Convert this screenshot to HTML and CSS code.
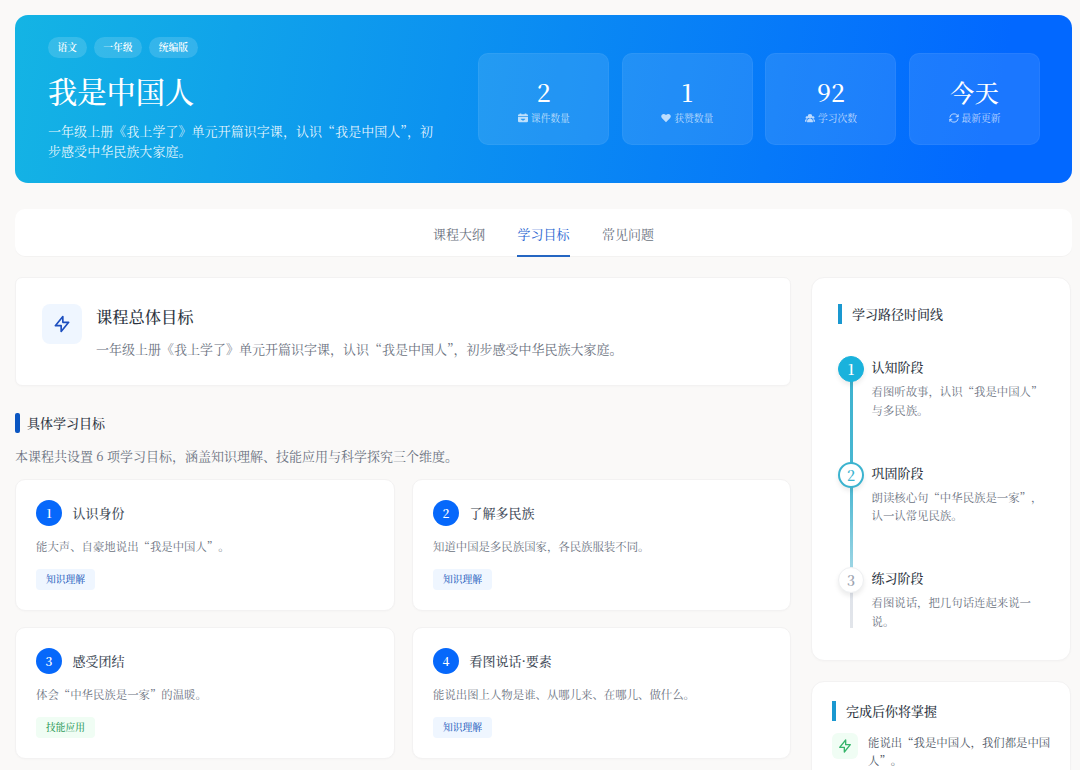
FILE: index.html
```html
<!DOCTYPE html>
<html lang="zh-CN">

<head>
    <meta charset="UTF-8">
    <meta name="viewport" content="width=device-width, initial-scale=1.0">
    <title>我是中国人</title>
    <link rel="stylesheet" href="styles.css">
</head>

<body>
    <div class="page">
        <header class="hero">
            <div class="hero-info">
                <div class="tags">
                    <span class="tag">语文</span>
                    <span class="tag">一年级</span>
                    <span class="tag">统编版</span>
                </div>
                <h1>我是中国人</h1>
                <p>一年级上册《我上学了》单元开篇识字课，认识“我是中国人”，初步感受中华民族大家庭。</p>
            </div>
            <div class="stats">
                <div class="stat">
                    <div class="stat-value">2</div>
                    <div class="stat-label">
                        <svg viewBox="0 0 24 24"><path fill="currentColor" fill-rule="evenodd" d="M4 1h4v2h8V1h4v2h1a3 3 0 0 1 3 3v2H0V6a3 3 0 0 1 3-3h1zM0 9.500h24V19a3 3 0 0 1-3 3H3a3 3 0 0 1-3-3zm7 4V16h3v2h4v-2h3v-2.500z"/></svg>
                        课件数量
                    </div>
                </div>
                <div class="stat">
                    <div class="stat-value">1</div>
                    <div class="stat-label">
                        <svg viewBox="0 0 24 24"><path fill="currentColor" d="M12 22 2.6 12.6C-.2 9.8 0 6 2.200 3.900 4.800 1.500 9 1.700 12 5c3-3.300 7.200-3.500 9.800-1.100C24 6 24.200 9.800 21.400 12.600z"/></svg>
                        获赞数量
                    </div>
                </div>
                <div class="stat">
                    <div class="stat-value">92</div>
                    <div class="stat-label">
                        <svg viewBox="0 0 24 24" fill="currentColor"><circle cx="12" cy="8" r="5.500"/><circle cx="4.500" cy="11" r="3"/><circle cx="19.500" cy="11" r="3"/><path d="M5 22v-2c0-4 3-6 7-6s7 2 7 6v2zM0 21v-2c0-2.500 2-4.500 5-4.500-1 1.500-1.500 3.500-1.500 6.500zM24 21v-2c0-2.500-2-4.500-5-4.500 1 1.500 1.500 3.500 1.500 6.500z"/></svg>
                        学习次数
                    </div>
                </div>
                <div class="stat">
                    <div class="stat-value">今天</div>
                    <div class="stat-label">
                        <svg viewBox="0 0 24 24" fill="none" stroke="currentColor" stroke-width="2.400"><path d="M2 11a10 10 0 0 1 18-5l2 3M22 3v6h-6M22 13a10 10 0 0 1-18 5l-2-3M2 21v-6h6"/></svg>
                        最新更新
                    </div>
                </div>
            </div>
        </header>

        <nav class="tabs">
            <a class="tab">课程大纲</a>
            <a class="tab active">学习目标</a>
            <a class="tab">常见问题</a>
        </nav>

        <div class="content">
            <main>
                <section class="card overall">
                    <div class="overall-icon">
                        <svg viewBox="0 0 24 24"><path d="M13 10V3L4 14h7v7l9-11h-7z"/></svg>
                    </div>
                    <div>
                        <h2>课程总体目标</h2>
                        <p>一年级上册《我上学了》单元开篇识字课，认识“我是中国人”，初步感受中华民族大家庭。</p>
                    </div>
                </section>

                <h3 class="goals-title">具体学习目标</h3>
                <p class="goals-intro">本课程共设置 6 项学习目标，涵盖知识理解、技能应用与科学探究三个维度。</p>

                <div class="goals">
                    <div class="card goal">
                        <div class="goal-head"><span class="num">1</span>认识身份</div>
                        <p>能大声、自豪地说出“我是中国人”。</p>
                        <span class="badge blue">知识理解</span>
                    </div>
                    <div class="card goal">
                        <div class="goal-head"><span class="num">2</span>了解多民族</div>
                        <p>知道中国是多民族国家，各民族服装不同。</p>
                        <span class="badge blue">知识理解</span>
                    </div>
                    <div class="card goal">
                        <div class="goal-head"><span class="num">3</span>感受团结</div>
                        <p>体会“中华民族是一家”的温暖。</p>
                        <span class="badge green">技能应用</span>
                    </div>
                    <div class="card goal">
                        <div class="goal-head"><span class="num">4</span>看图说话·要素</div>
                        <p>能说出图上人物是谁、从哪儿来、在哪儿、做什么。</p>
                        <span class="badge blue">知识理解</span>
                    </div>
                </div>
            </main>

            <aside>
                <section class="card timeline">
                    <h3 class="side-title">学习路径时间线</h3>
                    <ol class="steps">
                        <li class="step done">
                            <span class="dot">1</span>
                            <div>
                                <h4>认知阶段</h4>
                                <p>看图听故事，认识“我是中国人”与多民族。</p>
                            </div>
                        </li>
                        <li class="step current">
                            <span class="dot">2</span>
                            <div>
                                <h4>巩固阶段</h4>
                                <p>朗读核心句“中华民族是一家”，认一认常见民族。</p>
                            </div>
                        </li>
                        <li class="step">
                            <span class="dot">3</span>
                            <div>
                                <h4>练习阶段</h4>
                                <p>看图说话，把几句话连起来说一说。</p>
                            </div>
                        </li>
                    </ol>
                </section>

                <section class="card outcome">
                    <h3 class="side-title">完成后你将掌握</h3>
                    <div class="outcome-item">
                        <div class="outcome-icon">
                            <svg viewBox="0 0 24 24"><path d="M13 10V3L4 14h7v7l9-11h-7z"/></svg>
                        </div>
                        <p>能说出“我是中国人，我们都是中国人”。</p>
                    </div>
                </section>
            </aside>
        </div>
    </div>
</body>

</html>
```

FILE: styles.css
```css
* {
    box-sizing: border-box;
    margin: 0;
    padding: 0;
}

body {
    height: 770px;
    overflow: hidden;
    background-color: #faf9f8;
    color: #2b3340;
    font-family: "Noto Serif CJK SC", "Noto Serif SC", "Source Han Serif SC", "Noto Sans CJK SC", serif;
    font-size: 13px;
    line-height: 20px;
}

h1, h2, h3, h4 {
    font-weight: 500;
}

.page {
    height: 770px;
    overflow: hidden;
    padding: 15px 8px 0 15px;
}

.card {
    background-color: #fff;
    border: 1px solid #f3f2f2;
    border-radius: 10px;
    box-shadow: 0 1px 2px rgba(0, 0, 0, 0.02);
}

/* cabecera */
.hero {
    display: flex;
    justify-content: space-between;
    height: 168px;
    padding: 22px 32px 0 33px;
    border-radius: 13px;
    background: linear-gradient(100deg, #14b4e4 0%, #0268ff 92%);
    color: #fff;
}

.hero-info {
    width: 392px;
}

.tags {
    display: flex;
    gap: 7px;
}

.tag {
    height: 21px;
    padding: 0 9.6px;
    border-radius: 11px;
    background-color: rgba(255, 255, 255, 0.15);
    font-size: 9.75px;
    font-weight: 600;
    line-height: 21px;
}

.hero h1 {
    margin: 12px 0 11px;
    font-size: 29.25px;
    line-height: 40px;
}

.hero p {
    color: rgba(255, 255, 255, 0.9);
    letter-spacing: 0.05px;
}

.stats {
    display: grid;
    grid-template-columns: repeat(4, 131px);
    gap: 12.6px;
    height: 92px;
    margin-top: 16px;
}

.stat {
    padding-top: 22px;
    border: 1px solid rgba(255, 255, 255, 0.05);
    border-radius: 10px;
    background-color: rgba(255, 255, 255, 0.1);
    text-align: center;
}

.stat-value {
    font-size: 24.4px;
    font-weight: 500;
    line-height: 31px;
}

.stat-label {
    display: flex;
    justify-content: center;
    align-items: center;
    gap: 3px;
    margin-top: 1px;
    color: rgba(255, 255, 255, 0.7);
    font-size: 9.75px;
}

.stat-label svg {
    width: 10px;
    height: 10px;
}

/* pestañas */
.tabs {
    display: flex;
    justify-content: center;
    gap: 32.5px;
    height: 47px;
    margin-top: 26px;
    border-radius: 10px;
    background-color: #fff;
    box-shadow: 0 1px 1px rgba(0, 0, 0, 0.03);
}

.tab {
    height: 48px;
    color: #6b7280;
    line-height: 49px;
}

.tab.active {
    border-bottom: 2px solid #2566c2;
    color: #2563d0;
}

.content {
    display: flex;
    gap: 20px;
    margin-top: 21px;
}

main {
    width: 776px;
}

aside {
    width: 260px;
}

.overall {
    display: flex;
    gap: 14px;
    height: 109px;
    padding: 26px;
    border-radius: 7px;
}

.overall-icon {
    flex: none;
    width: 40px;
    height: 40px;
    border-radius: 8px;
    background-color: #eff6ff;
}

.overall-icon svg {
    width: 20px;
    height: 20px;
    margin: 10px;
    stroke: #1d4fbf;
}

.overall-icon svg, .outcome-icon svg {
    display: block;
    fill: none;
    stroke-width: 2;
    stroke-linecap: round;
    stroke-linejoin: round;
}

.overall h2 {
    margin: -1px 0 10px;
    font-size: 16.25px;
    line-height: 26px;
}

.overall p, .goals-intro {
    color: #6b7280;
}

.goals-title {
    display: flex;
    align-items: center;
    gap: 7px;
    margin-top: 27px;
    font-size: 13px;
}

.goals-title::before {
    content: "";
    width: 5px;
    height: 20px;
    border-radius: 2px;
    background-color: #0a56c2;
}

.goals-intro {
    margin: 13px 0 13px;
}

.goals {
    display: grid;
    grid-template-columns: 380px 379px;
    gap: 16px 17px;
}

.goal {
    height: 132px;
    padding: 20px;
}

.goal-head {
    display: flex;
    align-items: center;
    gap: 10.5px;
    color: #414a57;
    font-weight: 500;
}

.num {
    width: 26px;
    height: 26px;
    border-radius: 50%;
    background-color: #0668fb;
    color: #fff;
    font-size: 12px;
    font-weight: 600;
    line-height: 26px;
    text-align: center;
}

/* comillas y puntos a ancho completo */
.goal p, .step p, .outcome-item p {
    font-size: 11.4px;
    text-spacing-trim: space-all;
}

.goal p {
    margin: 10px 0 13px;
    color: #6b7280;
}

.badge {
    display: block;
    width: 59px;
    height: 21px;
    border-radius: 4px;
    font-size: 9.75px;
    font-weight: 500;
    line-height: 21px;
    text-align: center;
}

.badge.blue {
    background-color: #eff6ff;
    color: #2b64c0;
}

.badge.green {
    background-color: #f0fdf4;
    color: #2f9b5b;
}

/* columna lateral */
.side-title {
    display: flex;
    align-items: center;
    gap: 10px;
    font-size: 13px;
}

.side-title::before {
    content: "";
    width: 4px;
    height: 20px;
    background-color: #1a98d0;
}

.timeline {
    height: 384px;
    padding: 26px;
    border-radius: 13px;
}

.steps {
    position: relative;
    margin-top: 32px;
    list-style: none;
}

/* linea vertical detras de los puntos */
.steps::before {
    content: "";
    position: absolute;
    top: 12px;
    left: 12px;
    width: 3px;
    height: 260px;
    background: linear-gradient(#3cb2cf 0%, #4bb8d2 45%, #a5d8e6 80%, #dfe3ea 86%, #e2e5ea 100%);
}

.step {
    display: flex;
    gap: 7.5px;
    height: 105.5px;
}

.dot {
    position: relative;
    flex: none;
    width: 26px;
    height: 26px;
    border: 1px solid #eef0f2;
    border-radius: 50%;
    background-color: #fff;
    box-shadow: 0 3px 5px rgba(0, 0, 0, 0.08);
    color: #9ca3af;
    font-size: 14px;
    font-weight: 600;
    line-height: 25px;
    text-align: center;
}

.step.done .dot {
    border-color: #1ab2dc;
    background-color: #1ab2dc;
    color: #fff;
}

.step.current .dot {
    border: 2px solid #3bb3cf;
    color: #3bb3cf;
    line-height: 23px;
}

.step h4 {
    margin: 1px 0 5px;
    font-size: 13px;
}

.step p {
    color: #6b7280;
    line-height: 18.5px;
}

.outcome {
    height: 180px;
    margin-top: 20px;
    padding: 19px 18px 0 20px;
    border-radius: 13px;
}

.outcome-item {
    display: flex;
    gap: 10px;
    margin-top: 12px;
}

.outcome-icon {
    flex: none;
    width: 26px;
    height: 26px;
    border-radius: 6px;
    background-color: #f0fdf4;
}

.outcome-icon svg {
    width: 16px;
    height: 16px;
    margin: 5px;
    stroke: #35b56a;
}

.outcome-item p {
    color: #4b5563;
    line-height: 18px;
}
```
